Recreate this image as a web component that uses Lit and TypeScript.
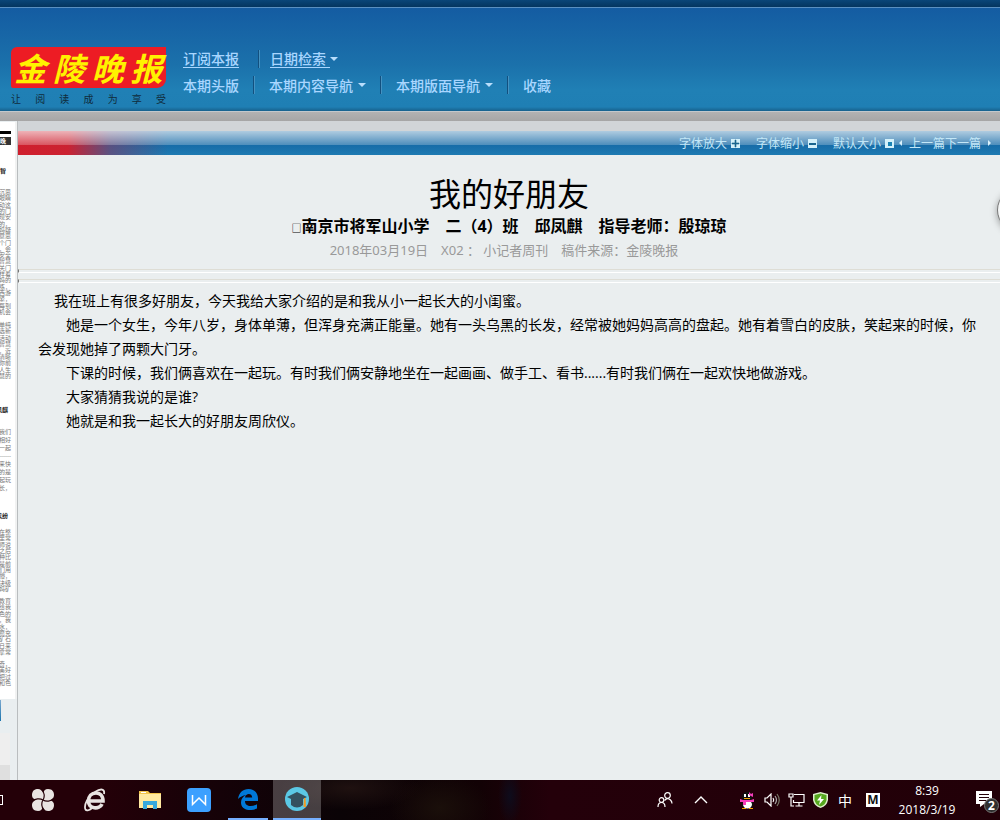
import { LitElement, html, css, svg } from "lit";
import { customElement } from "lit/decorators.js";

const SLOGAN = ["让", "阅", "读", "成", "为", "享", "受"];

const PARAGRAPHS = [
  "她是一个女生，今年八岁，身体单薄，但浑身充满正能量。她有一头乌黑的长发，经常被她妈妈高高的盘起。她有着雪白的皮肤，笑起来的时候，你会发现她掉了两颗大门牙。",
  "下课的时候，我们俩喜欢在一起玩。有时我们俩安静地坐在一起画画、做手工、看书......有时我们俩在一起欢快地做游戏。",
  "大家猜猜我说的是谁?",
  "她就是和我一起长大的好朋友周欣仪。",
];

@customElement("page-masthead")
class PageMasthead extends LitElement {
  static styles = css`
    :host { display: block; }
    .strip { height: 7px; background: linear-gradient(#0a4678, #04355f); border-bottom: 1px solid #5a90c0; }
    .bar {
      display: flex; align-items: flex-start; gap: 17px; height: 103px; padding-left: 11px; box-sizing: border-box;
      background: linear-gradient(#145ca2, #1b71ab 55%, #2080b5 80%, #1f7fb4 96%, #17618c);
    }
    .brand { width: 155px; padding-top: 39px; }
    .logo {
      height: 41px; background: #ed1c24; border-radius: 6px 0 9px 2px; color: #fff200;
      display: flex; align-items: center; justify-content: space-around;
      font: italic 700 32px/41px "Noto Sans CJK SC", sans-serif;
    }
    .slogan { display: flex; justify-content: space-between; margin-top: 4px;
      font: 10px/14px "Noto Sans CJK SC", sans-serif; color: #102c3c; }
    .nav { padding-top: 38px; }
    .row { display: flex; align-items: center; height: 26px; }
    a { color: #a9d6ff; font: 500 14px/20px "Noto Sans CJK SC", sans-serif; text-decoration: none; }
    a.line { line-height: 17px; border-bottom: 1px solid #a9d6ff; }
    a.wide { padding-right: 4px; }
    .sep { width: 1px; height: 18px; background: #12507f; border-right: 1px solid #4592c1; margin: 0 14px; }
    .first .sep { margin: 0 10px 0 19px; }
    .arrow { border: 4px solid transparent; border-top-color: #b9defc; border-bottom: 0; }
    .gap { margin-left: 5px; }
    .shade { height: 10px; background: linear-gradient(#b2b2b2, #a6a6a6); border-top: 1px solid #c3c8cb; box-sizing: border-box; }
  `;
  render() {
    return html`
      <div class="strip"></div>
      <header class="bar">
        <div class="brand">
          <div class="logo"><span>金</span><span>陵</span><span>晚</span><span>报</span></div>
          <div class="slogan">${SLOGAN.map((c) => html`<span>${c}</span>`)}</div>
        </div>
        <nav class="nav">
          <div class="row first">
            <a class="line" href="#">订阅本报</a><i class="sep"></i><a class="line wide" href="#">日期检索</a><i class="arrow"></i>
          </div>
          <div class="row">
            <a href="#">本期头版</a><i class="sep"></i>
            <a href="#">本期内容导航</a><i class="arrow gap"></i><i class="sep"></i>
            <a href="#">本期版面导航</a><i class="arrow gap"></i><i class="sep"></i>
            <a href="#">收藏</a>
          </div>
        </nav>
      </header>
      <div class="shade"></div>
    `;
  }
}

@customElement("paper-preview")
class PaperPreview extends LitElement {
  static styles = css`
    :host { display: flex; flex-direction: column; width: 17px; flex: none; overflow: hidden; border-right: 1px solid #b9bdbf; background: #e9eef0; }
    .sheet { width: 15px; height: 577px; flex: none; background: #fff; border-right: 2px solid #f1f2f2; box-sizing: content-box; overflow: hidden; margin-top: 1px;
      font: 6px/6px "Liberation Sans", "Noto Sans CJK SC", sans-serif; color: #777; }
    .block { display: flex; flex-direction: column; justify-content: space-between; align-items: flex-end; width: 11px; white-space: nowrap; }
    .rule { width: 11px; height: 3px; margin-top: 9px; background: #000; }
    .tag { width: 11px; height: 8px; line-height: 8px; margin-top: 3px; background: #333; color: #fff; display: flex; justify-content: flex-end; font-weight: 700; }
    .head { width: 11px; display: flex; justify-content: flex-end; color: #222; font-weight: 700; white-space: nowrap; }
    .h1 { margin-top: 23px; width: 6px; }
    .a { height: 126px; margin-top: 15px; }
    .b { height: 57px; margin-top: 7px; }
    .h2 { margin-top: 28px; width: 8px; }
    .c { height: 62px; margin-top: 16px; }
    .h3 { margin-top: 22px; width: 8px; }
    .d { height: 63px; margin-top: 10px; }
    .e { height: 57px; margin-top: 6px; }
    .f { height: 25px; margin-top: 6px; }
    .blue { width: 1px; height: 21px; flex: none; margin-top: 1px; background: linear-gradient(#7ba9d0, #1b74ad); }
    .box { width: 10px; height: 32px; flex: none; margin-top: 12px; background: #eee; }
    .box2 { width: 10px; flex: 1; background: #dfdfdf; }
  `;
  private block(name: string, text: string) {
    return html`<div class="block ${name}">${text.split(" ").map((t) => html`<span>${t}</span>`)}</div>`;
  }
  render() {
    return html`
      <div class="sheet">
        <div class="rule"></div>
        <div class="tag"><span>晚报</span></div>
        <div class="head h1"><span>智</span></div>
        ${this.block("a", "沉思 眼睛 动这 的门 现安 的， 妈疑 意思 个门 ，会 安全 智慧 关门 样着 妈的 练， 西游 紧， 每到 机会")}
        ${this.block("b", "单纯 选新 活动 智慧 ，近 清晰 你前 人生 慧的")}
        <div class="head h2"><span>凤麒</span></div>
        ${this.block("c", "我们 相好 一起 ------ 来快 的是 起玩 长，")}
        <div class="head h3"><span>缤纷</span></div>
        ${this.block("d", "在整 里常 师说 之后 种比 是前 们用 懵， 决级 妈矿")}
        ${this.block("e", "教育 给我 色的 ，我 水， 愿充 矿石 日来 拿常")}
        ${this.block("f", "奇， 美好 把过 和色")}
      </div>
      <div class="blue"></div>
      <div class="box"></div>
      <div class="box2"></div>
    `;
  }
}

@customElement("article-view")
class ArticleView extends LitElement {
  static styles = css`
    :host { display: block; flex: 1; min-width: 0; color: #000; }
    .top { height: 10px; background: #d1d5d8; }
    .tools {
      display: flex; justify-content: flex-end; align-items: center; height: 24px; padding-right: 9px; box-sizing: border-box;
      background:
        linear-gradient(rgba(255, 255, 255, .66), rgba(255, 255, 255, .24)) top / 100% 14px no-repeat,
        linear-gradient(90deg, #cf1f2d 0, #cb2231 50px, rgba(110, 70, 115, .75) 92px, rgba(27, 112, 172, 0) 150px),
        linear-gradient(#1569a6 50%, #1e7ab2);
    }
    button, .tools a { font: 12px/18px "Noto Sans CJK SC", sans-serif; color: #c3e7f7; background: none; border: 0; padding: 0; text-decoration: none; }
    button { display: flex; align-items: center; gap: 4px; margin-right: 16px; cursor: pointer; }
    button.last { margin-right: 5px; }
    svg { display: block; }
    .left { border: 3px solid transparent; border-right-color: #d9f1fb; border-left: 0; margin-right: 7px; }
    .right { border: 3px solid transparent; border-left-color: #d9f1fb; border-right: 0; margin-left: 7px; }
    .heading { padding: 17px 0 7px; text-align: center; }
    h1 { margin: 0; font: 400 32px/40px "Noto Sans CJK SC", sans-serif; }
    h2 { margin: 0; padding-top: 2px; font: 700 16px/24px "Open Sans", "Noto Sans CJK SC", sans-serif; white-space: pre; }
    .box { font-size: 10px; line-height: 10px; font-weight: 400; }
    .meta { margin: 0; padding-right: 10px; color: #999; font: 13px/24px "Noto Sans", "Noto Sans CJK SC", sans-serif; white-space: pre; }
    .rule { height: 2px; border-top: 1px solid #deddd5; border-bottom: 1px solid #fff; border-left: 1px solid #777; margin-bottom: 6px; }
    .text { padding: 0 17px 0 20px; font: 14px/24px "Open Sans", "Noto Sans CJK SC", sans-serif; }
    .text p { margin: 0; text-indent: 2em; }
    .text .lead { text-indent: 16px; }
  `;
  render() {
    return html`
      <div class="top"></div>
      <div class="tools">
        <button>字体放大<svg width="9" height="9"><path fill="#d3f0fa" d="M0 0h9v9H0z" /><path fill="#17648f" d="M4 1h1v3h3v1H5v3H4V5H1V4h3z" stroke="#17648f" stroke-width=".6" /></svg></button>
        <button>字体缩小<svg width="9" height="9"><path fill="#d3f0fa" d="M0 0h9v9H0z" /><path fill="#17648f" d="M1 4h7v2H1z" /></svg></button>
        <button class="last">默认大小<svg width="9" height="9"><path fill="#d3f0fa" d="M0 0h9v9H0z" /><path fill="#1a83b4" d="M3 3h4v4H3z" /></svg></button>
        <i class="left"></i><a href="#">上一篇</a><a href="#">下一篇</a><i class="right"></i>
      </div>
      <article>
        <div class="heading">
          <h1>我的好朋友</h1>
          <h2><span class="box">□</span>南京市将军山小学　二（4）班　邱凤麒　指导老师：殷琼琼</h2>
          <p class="meta">2018年03月19日　X02 ： 小记者周刊　稿件来源：金陵晚报</p>
        </div>
        <div class="rule"></div>
        <div class="rule"></div>
        <div class="text">
          <p class="lead">我在班上有很多好朋友，今天我给大家介绍的是和我从小一起长大的小闺蜜。</p>
          ${PARAGRAPHS.map((p) => html`<p>${p}</p>`)}
        </div>
      </article>
    `;
  }
}

const petals = [0, 90, 180, 270].map(
  (r) => svg`<path transform="rotate(${r} 11 11)" fill="#e9e4e2" d="M11 11C8 11.500 0 12 0 6C0 1.500 3 0 6 0C10.500 0 12.500 5 11 11Z" />`
);
const seams = [0, 90, 180, 270].map(
  (r) => svg`<path transform="rotate(${r} 11 11)" fill="none" stroke="#240008" stroke-width="1.200" d="M11 11C13 8 12.500 3 9.500 0" />`
);

@customElement("task-bar")
class TaskBar extends LitElement {
  static styles = css`
    :host {
      display: flex; height: 40px; flex: none; position: relative; overflow: hidden; color: #fff;
      background:
        radial-gradient(ellipse 70px 22px at 35% 20%, #1f1110, transparent),
        radial-gradient(ellipse 50px 35px at 44% 70%, #1a0f0a, transparent),
        radial-gradient(ellipse 12px 30px at 51% 40%, #0e0c1c, transparent),
        linear-gradient(90deg, #240008 0, #240008 10%, #150208 22%, #0a0306 34%, #120205 48%, #24000a 55%, #220008);
    }
    button { display: flex; align-items: center; justify-content: center; height: 40px; padding: 0; margin: 0; border: 0; background: none; color: #fff; box-sizing: border-box; }
    svg { display: block; }
    .edge { width: 3px; height: 10px; margin: 15px 0 0; border: 1px solid #fff; border-left: 0; box-sizing: border-box; }
    .apps { display: flex; flex: 1; }
    .w40 { width: 40px; }
    .a { margin-left: 20px; }
    .b { margin-left: 12px; }
    .c { margin-left: 15px; }
    .d { margin-left: 9px; }
    .e { margin-left: 9px; border-bottom: 2px solid #76b0ff; }
    .f { margin-left: 5px; width: 48px; border-bottom: 2px solid #76b0ff; background: rgba(255, 255, 255, .24); }
    .tray { display: flex; }
    .w24 { width: 24px; }
    .w36 { width: 36px; }
    .push { margin-left: 17px; }
    .ime { width: 26px; font: 14px/20px "Noto Sans CJK SC", sans-serif; }
    .mode { width: 30px; }
    .m { width: 14px; height: 14px; background: #fff; color: #111; font: 700 12px/14px "Open Sans", sans-serif; }
    .clock { width: 78px; flex-direction: column; font: 12px/19px "Open Sans", sans-serif; }
    .note { width: 34px; justify-content: flex-end; }
  `;
  render() {
    return html`
      <i class="edge"></i>
      <div class="apps">
        <button class="w40 a" aria-label="浏览器"><svg width="22" height="22" viewBox="0 0 22 22">${petals}${seams}</svg></button>
        <button class="w40 b" aria-label="Internet Explorer"><svg width="22" height="24" viewBox="0 0 22 24"><path fill="none" stroke="#e9e4e2" stroke-width="3.600" d="M5 13h14C19 7 15.500 5 12 5C7.500 5 4.500 8.500 4.500 13C4.500 21 15.500 22 18 16" /><path fill="none" stroke="#e9e4e2" stroke-width="1.800" d="M20 6C21 1 17 0 11 4C4 8-.5 17 1.500 21.500C2.500 23.500 6 22 8 20" /></svg></button>
        <button class="w40 c" aria-label="文件"><svg width="22" height="18" viewBox="0 0 22 18"><path fill="#f3c44b" d="M0 0h9l2 2h11v15H0z" /><path fill="#ffe9a0" d="M0 3h22v14H0z" /><path fill="#37a8dd" d="M4 18v-8h14v8h-4v-4H8v4z" /><path fill="#fff" d="M2 1h5v1H2z" /></svg></button>
        <button class="w40 d" aria-label="WPS"><svg width="24" height="24" viewBox="0 0 24 24"><rect width="24" height="24" rx="4" fill="#3ca0ff" /><path fill="none" stroke="#fff" stroke-width="1.500" d="M5.500 7v9.500L12 10l6.500 6.500V7" /></svg></button>
        <button class="w40 e" aria-label="Edge"><svg width="20" height="21" viewBox="0 0 20 21"><path fill="#0078d7" d="M0 10C1 3.500 5 0 10.500 0C17 0 20 5 20 9.500V12H7c0 6 7 6 12 3.200V19.500C11 23 3 20.500 3 13.500C3 10 5 7.500 8 6C5 6.500 2 8 0 10ZM7 8.500H14.200C14 3.500 7.500 4 7 8.500Z" /></svg></button>
        <button class="f" aria-label="学习"><svg width="24" height="24" viewBox="0 0 24 24"><circle cx="12" cy="12" r="12" fill="#5bc8e5" /><path fill="#34515f" d="M12 5l10 5-4 2v6q-6 5-12 0v-6L2 10z" /><path fill="#f39b22" d="M19 11h1.500l.5 9h-2.500z" /></svg></button>
      </div>
      <div class="tray">
        <button class="w36" aria-label="人脉"><svg width="16" height="16" viewBox="0 0 16 16" fill="none" stroke="#fff" stroke-width="1.200"><circle cx="10.500" cy="3.500" r="2.800" /><circle cx="4.500" cy="8" r="2.300" /><path d="M1 15q0-4.500 3.500-4.500T8 15M7.500 8.500q3-3.500 6-.5q1.500 1.500 1.500 3.500" /></svg></button>
        <button class="w36" aria-label="展开"><svg width="14" height="8" fill="none" stroke="#fff" stroke-width="1.400"><path d="M1 7l6-6 6 6" /></svg></button>
        <button class="w24 push" aria-label="QQ"><svg width="16" height="17" viewBox="0 0 16 17"><ellipse cx="7" cy="5" rx="5" ry="5" fill="#111" /><path fill="#fff" d="M4 2h2v3H4zM8 2h2v3H8z" /><path fill="#f8a000" d="M4 6h6v1H4z" /><ellipse cx="7.500" cy="12" rx="6" ry="4.500" fill="#111" /><ellipse cx="7.500" cy="12.500" rx="4.500" ry="4" fill="#fff" /><path fill="#f63dbc" d="M0 7l3 1h8l3-1v3H6v3H3v-3H0zM9 0l2 2 2-1v4l-4-2z" /><path fill="#f8a000" d="M2 16h4v1H2zM9 16h4v1H9z" /></svg></button>
        <button class="w24" aria-label="音量"><svg width="16" height="14" viewBox="0 0 16 14" fill="none" stroke="#fff" stroke-width="1.200"><path d="M1 5h2l4-4v12L3 9H1z" /><path d="M9 5q1.500 2 0 4" /><path stroke="#aaa" d="M11 3q3 4 0 8" /><path stroke="#776" d="M13 1q4.500 6 0 12" /></svg></button>
        <button class="w24" aria-label="网络"><svg width="17" height="14" viewBox="0 0 17 14" fill="none" stroke="#fff" stroke-width="1.200"><path d="M6 1.500h10v8H5.500V7M11 9.500v3M7.500 13h7M1 1h4v3H1zM3 4v9h3" /></svg></button>
        <button class="w24" aria-label="安全"><svg width="15" height="16" viewBox="0 0 15 16"><path fill="#dff0cb" d="M7.500 0L15 2v6q-1 6-7.500 8Q1 14 0 8V2z" /><path fill="#56a81e" d="M7.500 1.500L13.500 3v5q-1 5-6 6.500q-5-1.500-6-6.500V3z" /><path fill="#fff" d="M8.500 3L4 8.500h3L6 13l5-6H8z" /></svg></button>
        <button class="ime">中</button>
        <button class="mode" aria-label="输入法"><span class="m">M</span></button>
        <button class="clock"><span>8:39</span><span>2018/3/19</span></button>
        <button class="note" aria-label="通知"><svg width="24" height="26" viewBox="0 0 24 26"><path fill="#fff" d="M0 4h16v13H8l-4 3v-3H0z" /><path stroke="#240008" d="M3 7.500h10M3 10.500h10M3 13.500h7" /><circle cx="15.500" cy="18.500" r="7" fill="#303030" stroke="#777" /><text x="15.500" y="23" text-anchor="middle" fill="#fff" font-family="Open Sans, sans-serif" font-size="12" font-weight="700">2</text></svg></button>
      </div>
    `;
  }
}

@customElement("app-root")
class AppRoot extends LitElement {
  static styles = css`
    :host { display: flex; flex-direction: column; min-height: 100vh; background: #eaeeef; position: relative; overflow: hidden; font-family: "Noto Sans CJK SC", sans-serif; }
    .main { display: flex; flex: 1; }
    .handle { position: absolute; top: 188px; right: -41px; width: 44px; height: 44px; border-radius: 22px; border: 1px solid #777; background: #f4f6f6; box-shadow: 0 2px 7px rgba(0, 0, 0, .35); box-sizing: border-box; padding: 0; }
  `;
  render() {
    return html`
      <page-masthead></page-masthead>
      <div class="main">
        <paper-preview></paper-preview>
        <article-view></article-view>
      </div>
      <button class="handle" aria-label="展开侧栏"></button>
      <task-bar></task-bar>
    `;
  }
}
